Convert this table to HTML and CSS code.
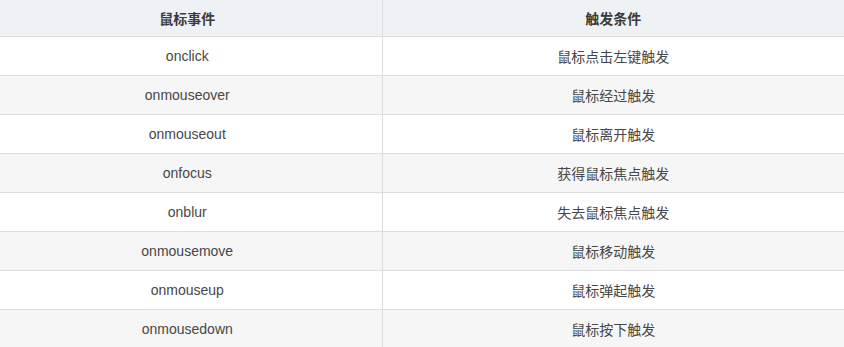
FILE: index.html
```html
<!DOCTYPE html>
<html lang="zh">
<head>
<meta charset="utf-8">
<link rel="stylesheet" href="styles.css">
</head>
<body>
<table class="events">
  <thead>
    <tr><th class="col-a">鼠标事件</th><th>触发条件</th></tr>
  </thead>
  <tbody>
    <tr><td class="col-a">onclick</td><td>鼠标点击左键触发</td></tr>
    <tr><td class="col-a">onmouseover</td><td>鼠标经过触发</td></tr>
    <tr><td class="col-a">onmouseout</td><td>鼠标离开触发</td></tr>
    <tr><td class="col-a">onfocus</td><td>获得鼠标焦点触发</td></tr>
    <tr><td class="col-a">onblur</td><td>失去鼠标焦点触发</td></tr>
    <tr><td class="col-a">onmousemove</td><td>鼠标移动触发</td></tr>
    <tr><td class="col-a">onmouseup</td><td>鼠标弹起触发</td></tr>
    <tr><td class="col-a">onmousedown</td><td>鼠标按下触发</td></tr>
  </tbody>
</table>
</body>
</html>
```
FILE: styles.css
```css
html, body {
  margin: 0;
  padding: 0;
  background: #fff;
}
.events {
  width: 844px;
  border-collapse: collapse;
  table-layout: fixed;
  font-family: "Liberation Sans", Arial, "Noto Sans CJK SC", sans-serif;
  font-size: 14px;
  color: #474747;
}
.events th,
.events td {
  padding: 0 8px;
  text-align: center;
  border-bottom: 1px solid #ddd;
  box-sizing: border-box;
}
.events th {
  height: 36px;
  background: #eff2f5;
  font-weight: bold;
  color: #3a3a3a;
}
.events td {
  height: 39px;
}
.events .col-a {
  width: 382px;
  padding: 0 11px 0 4px;
  border-right: 1px solid #ddd;
}
.events tbody tr:nth-child(even) td {
  background: #f6f6f6;
}
```
